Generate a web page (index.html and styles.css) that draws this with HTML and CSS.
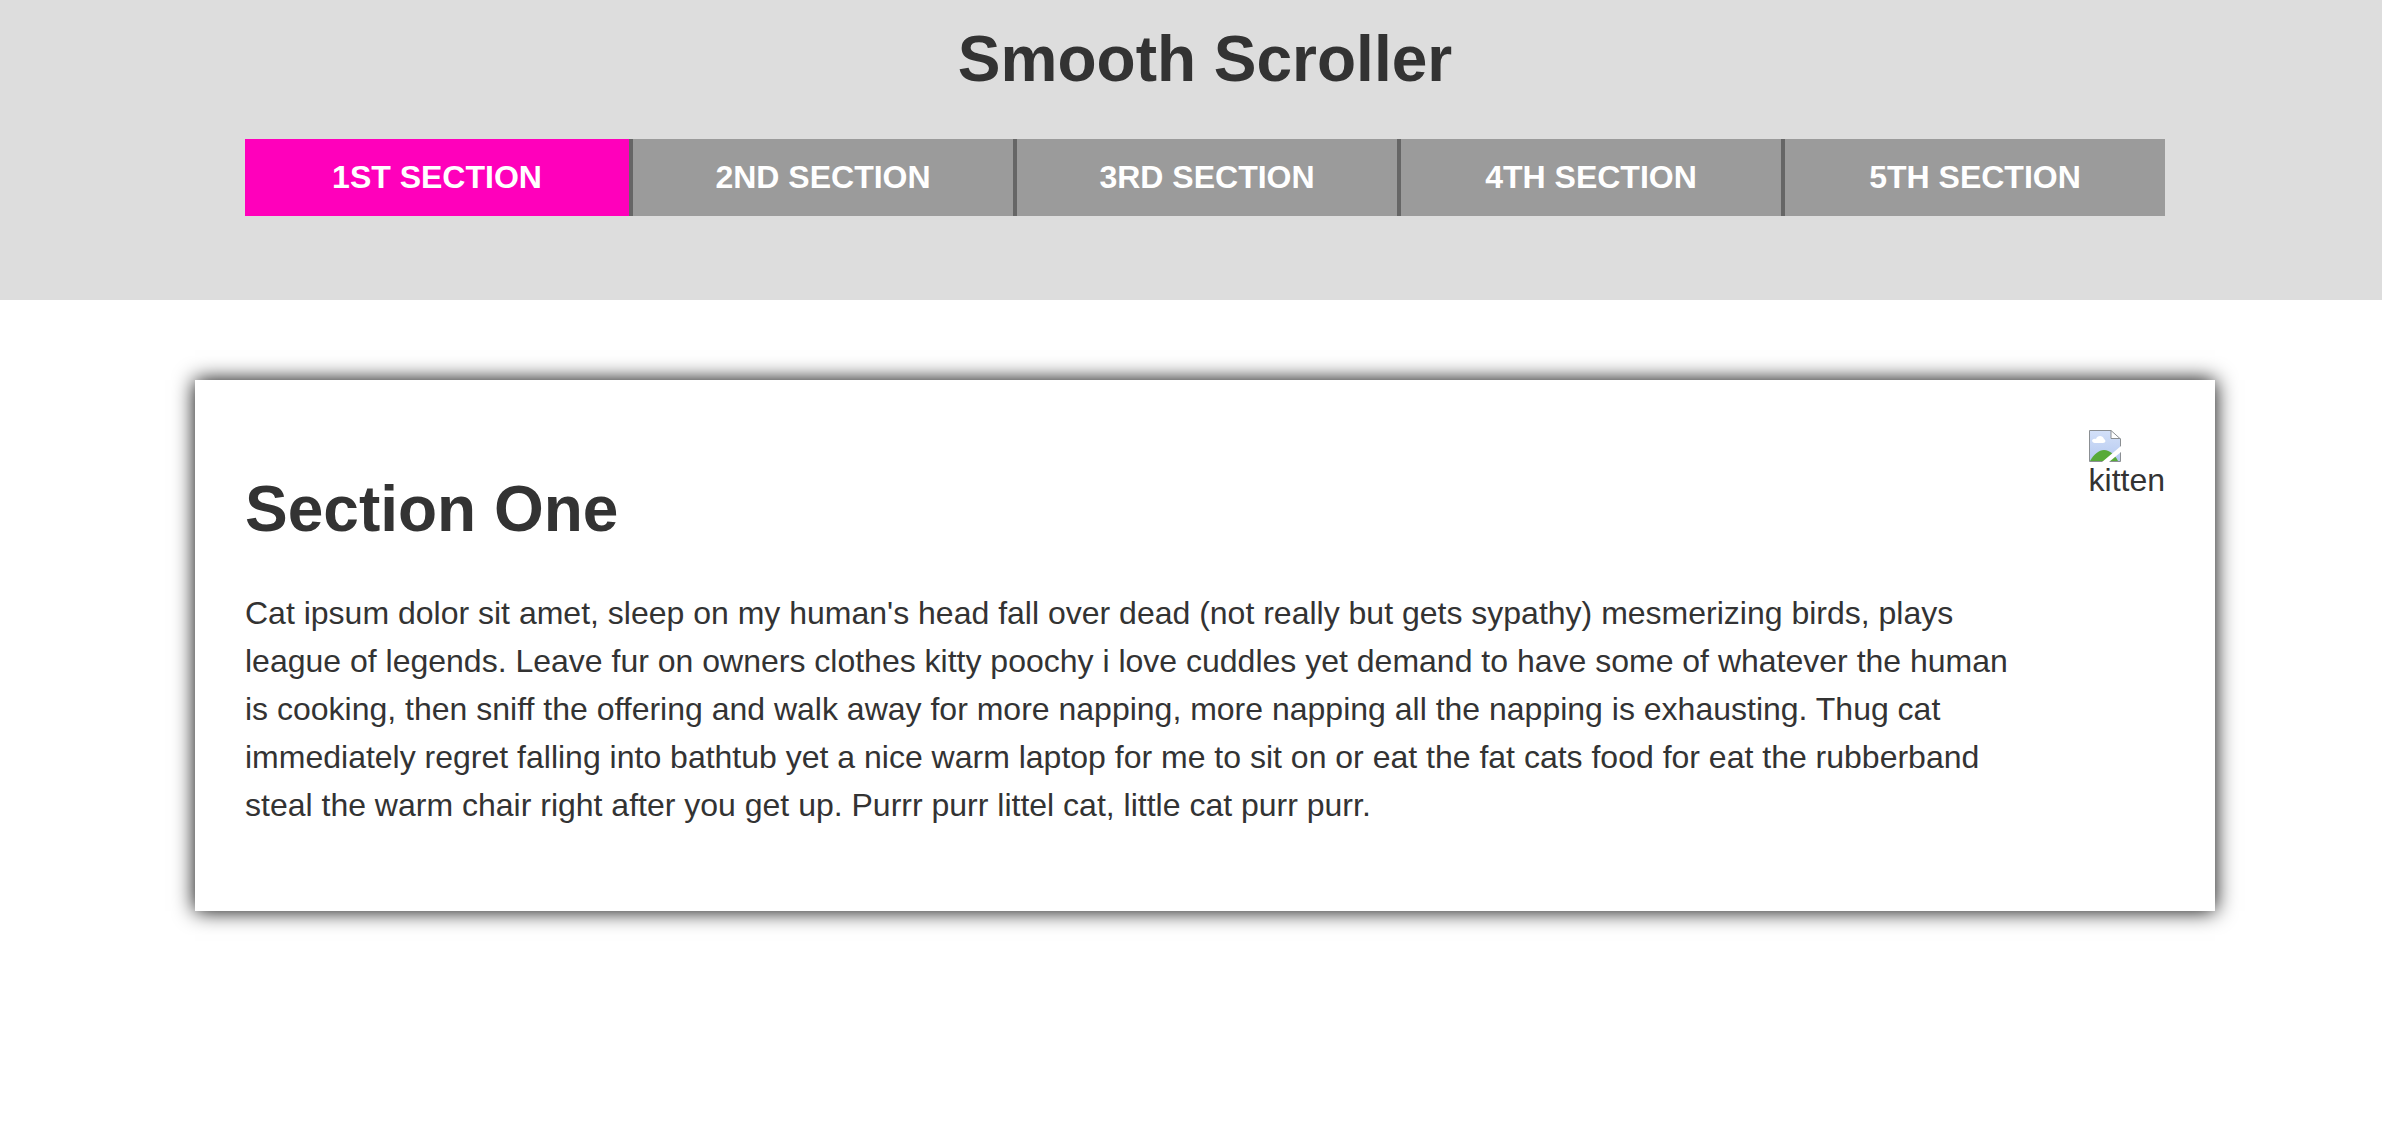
FILE: index.html
```html
<!DOCTYPE html>
<html lang="en">
<head>
<meta charset="utf-8">
<title>Smooth Scroller</title>
<link rel="stylesheet" href="styles.css">
</head>
<body>
<header class="site-header">
  <h1 class="title">Smooth Scroller</h1>
  <nav class="nav">
    <a class="nav-link active" href="#section-1">1st Section</a>
    <a class="nav-link" href="#section-2">2nd Section</a>
    <a class="nav-link" href="#section-3">3rd Section</a>
    <a class="nav-link" href="#section-4">4th Section</a>
    <a class="nav-link" href="#section-5">5th Section</a>
  </nav>
</header>
<main class="content">
  <section class="card" id="section-1">
    <div class="card-text">
      <h2 class="title">Section One</h2>
      <p class="copy">Cat ipsum dolor sit amet, sleep on my human's head fall over dead (not really but gets sypathy) mesmerizing birds, plays league of legends. Leave fur on owners clothes kitty poochy i love cuddles yet demand to have some of whatever the human is cooking, then sniff the offering and walk away for more napping, more napping all the napping is exhausting. Thug cat immediately regret falling into bathtub yet a nice warm laptop for me to sit on or eat the fat cats food for eat the rubberband steal the warm chair right after you get up. Purrr purr littel cat, little cat purr purr.</p>
    </div>
    <figure class="picture">
      <svg class="picture-icon" viewBox="0 0 32 32" aria-hidden="true">
        <defs>
          <linearGradient id="sky" x1="0" y1="0" x2="0" y2="1">
            <stop offset="0" stop-color="#d3e0f8"/>
            <stop offset="1" stop-color="#b5c9f0"/>
          </linearGradient>
        </defs>
        <path d="M0 0H22L32 9V32H0Z" fill="#fff"/>
        <path d="M1 1H22V9H31V31H1Z" fill="url(#sky)"/>
        <path d="M6 13C2 13 2 8 7 9C8 5 14 5 15 9C17 10 17 13 14 13Z" fill="#fff"/>
        <path d="M1 31C5 24 10 20 15 20C21 20 26 25 29 31Z" fill="#57aa38"/>
        <path d="M.5 31.500V.5H22L31.500 9V31.500Z" fill="none" stroke="#8b8f93"/>
        <path d="M22 .5V8.500H31.500" fill="none" stroke="#8b8f93"/>
        <path d="M13 32L32 16V22L20 32Z" fill="#fff"/>
      </svg>
      <figcaption class="picture-label">kitten</figcaption>
    </figure>
  </section>
</main>
</body>
</html>
```
FILE: styles.css
```css
* {
  box-sizing: border-box;
}

body {
  margin: 0;
  background: #fff;
  color: #333;
  font: 32px/48px "Liberation Sans", Arial, sans-serif;
}

.site-header {
  padding: 11px 217px 84px 245px;
  background: #ddd;
}

.title {
  margin: 0 0 32px;
  font-size: 64px;
  line-height: 96px;
}

.site-header .title {
  text-align: center;
}

.nav {
  display: grid;
  grid-template-columns: repeat(5, 1fr);
}

.nav-link {
  padding: 20px 0;
  border-left: 4px solid #666;
  background: #9b9b9b;
  color: #fff;
  font-weight: bold;
  line-height: 37px;
  text-align: center;
  text-decoration: none;
  text-transform: uppercase;
}

.nav-link.active {
  border-left: 0;
  background: #ff00bb;
}

.content {
  padding: 80px 167px 80px 195px;
}

.card {
  display: flex;
  align-items: flex-start;
  gap: 64px;
  padding: 50px;
  background: #fff;
  box-shadow: 0 0 20px #000;
}

.card-text {
  flex: 1;
  padding: 31px 0 32px;
}

.copy {
  margin: 0;
}

.picture {
  margin: 0;
}

.picture-icon {
  display: block;
  width: 32px;
  height: 32px;
}

.picture-label {
  line-height: 36px;
}
```
